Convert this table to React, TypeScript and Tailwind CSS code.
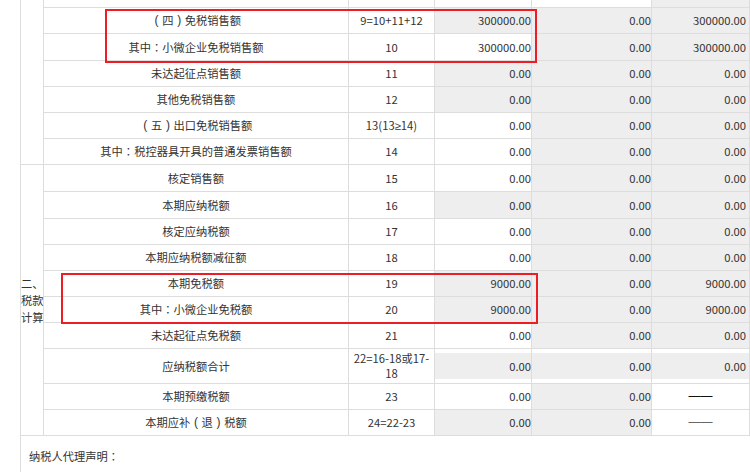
import React from "react";

type Row = {
  name: string;
  no: React.ReactNode;
  a: string;
  aGray: boolean;
  b: string;
  c: string;
  cWhite?: boolean;
  cColor?: string;
  tall?: boolean;
};

function Txt({ s }: { s: string }) {
  const parts = s.split(/([：（）])/);
  return (
    <>
      {parts.map((p, i) => {
        if (p === "：")
          return (
            <span key={i} className="font-['Noto_Sans_CJK_TC',sans-serif]">
              {p}
            </span>
          );
        if (p === "（" || p === "）")
          return (
            <span key={i} className="inline-block w-[11.25px] text-center font-['Liberation_Sans',sans-serif] text-[12px]">
              {p === "（" ? "(" : ")"}
            </span>
          );
        return <React.Fragment key={i}>{p}</React.Fragment>;
      })}
    </>
  );
}

const rows: Row[] = [
  { name: "（四）免税销售额", no: "9=10+11+12", a: "300000.00", aGray: true, b: "0.00", c: "300000.00" },
  { name: "其中：小微企业免税销售额", no: "10", a: "300000.00", aGray: false, b: "0.00", c: "300000.00" },
  { name: "未达起征点销售额", no: "11", a: "0.00", aGray: true, b: "0.00", c: "0.00" },
  { name: "其他免税销售额", no: "12", a: "0.00", aGray: true, b: "0.00", c: "0.00" },
  {
    name: "（五）出口免税销售额",
    no: (
      <span>
        13(13<span className="font-['Liberation_Sans',sans-serif]">≥</span>14)
      </span>
    ),
    a: "0.00",
    aGray: false,
    b: "0.00",
    c: "0.00",
  },
  { name: "其中：税控器具开具的普通发票销售额", no: "14", a: "0.00", aGray: false, b: "0.00", c: "0.00" },
  { name: "核定销售额", no: "15", a: "0.00", aGray: false, b: "0.00", c: "0.00" },
  { name: "本期应纳税额", no: "16", a: "0.00", aGray: true, b: "0.00", c: "0.00" },
  { name: "核定应纳税额", no: "17", a: "0.00", aGray: false, b: "0.00", c: "0.00" },
  { name: "本期应纳税额减征额", no: "18", a: "0.00", aGray: false, b: "0.00", c: "0.00" },
  { name: "本期免税额", no: "19", a: "9000.00", aGray: true, b: "0.00", c: "9000.00" },
  { name: "其中：小微企业免税额", no: "20", a: "9000.00", aGray: true, b: "0.00", c: "9000.00" },
  { name: "未达起征点免税额", no: "21", a: "0.00", aGray: false, b: "0.00", c: "0.00" },
  {
    name: "应纳税额合计",
    no: (
      <span className="leading-[15px] text-center">
        22=16-18或17-
        <br />
        18
      </span>
    ),
    a: "0.00",
    aGray: true,
    b: "0.00",
    c: "0.00",
    tall: true,
  },
  { name: "本期预缴税额", no: "23", a: "0.00", aGray: false, b: "0.00", c: "——", cWhite: true, cColor: "text-[#111]" },
  { name: "本期应补（退）税额", no: "24=22-23", a: "0.00", aGray: true, b: "0.00", c: "——", cWhite: true, cColor: "text-[#666]" },
];

function ValCell({
  value,
  gray,
  tall,
  pad,
  dash,
  color,
}: {
  value: string;
  gray: boolean;
  tall?: boolean;
  pad: string;
  dash?: boolean;
  color?: string;
}) {
  const inner = `${gray ? "bg-[#eeeeee]" : "bg-white"} ${tall ? "h-[26px]" : "h-full"} w-full flex items-center ${
    dash ? "justify-center font-['Liberation_Sans',sans-serif] text-[12px]" : "justify-end"
  } ${pad} ${color ?? "text-[#333]"}`;
  return (
    <div className="bg-white flex items-center">
      <div className={inner}>{value}</div>
    </div>
  );
}

export default function App() {
  return (
    <div className="relative w-[750px] h-[472px] overflow-hidden bg-white font-['Noto_Sans_CJK_SC',sans-serif] text-[11.25px] leading-[15px] text-[#333]">
      <div className="ml-[20px] w-[730px] grid gap-px px-px pb-px bg-[#dddddd] grid-cols-[22px_304px_85px_96px_119px_97px] grid-rows-[7px_25px_26px_25px_25px_25px_25px_26px_26px_25px_25px_25px_25px_25px_34px_25px_25px]">
        {/* section 1 (cut off) */}
        <div className="row-span-7 bg-white" />
        {/* partial top row */}
        <div className="bg-white" />
        <div className="bg-white" />
        <div className="bg-white" />
        <div className="bg-white" />
        <div className="bg-[#eeeeee]" />

        {rows.map((r, i) => (
          <React.Fragment key={i}>
            {i === 6 && (
              <div className="row-span-10 bg-white flex items-center">
                <div className="whitespace-nowrap leading-[17px] text-left">
                  二、
                  <br />
                  税款
                  <br />
                  计算
                </div>
              </div>
            )}
            <div className="bg-white flex items-center justify-center whitespace-nowrap">
              <Txt s={r.name} />
            </div>
            <div className="bg-white flex items-center justify-center whitespace-nowrap">{r.no}</div>
            <ValCell value={r.a} gray={r.aGray} tall={r.tall} pad="pr-0" />
            <ValCell value={r.b} gray={true} tall={r.tall} pad="pr-0" />
            <ValCell
              value={r.c}
              gray={!r.cWhite}
              tall={r.tall}
              pad={r.cWhite ? "pr-0" : "pr-[3px]"}
              dash={r.cWhite}
              color={r.cColor}
            />
          </React.Fragment>
        ))}
      </div>

      <div className="ml-[20px] h-[40px] border-l border-[#dddddd] flex items-center pl-[8px]">
        纳税人代理声明<Txt s="：" />
      </div>

      {/* highlight overlays */}
      <div className="absolute left-[105px] top-[9px] w-[432px] h-[54px] border-2 border-[#ee1c25] pointer-events-none" />
      <div className="absolute left-[61px] top-[273px] w-[477px] h-[51px] border-2 border-[#ee1c25] pointer-events-none" />
    </div>
  );
}
